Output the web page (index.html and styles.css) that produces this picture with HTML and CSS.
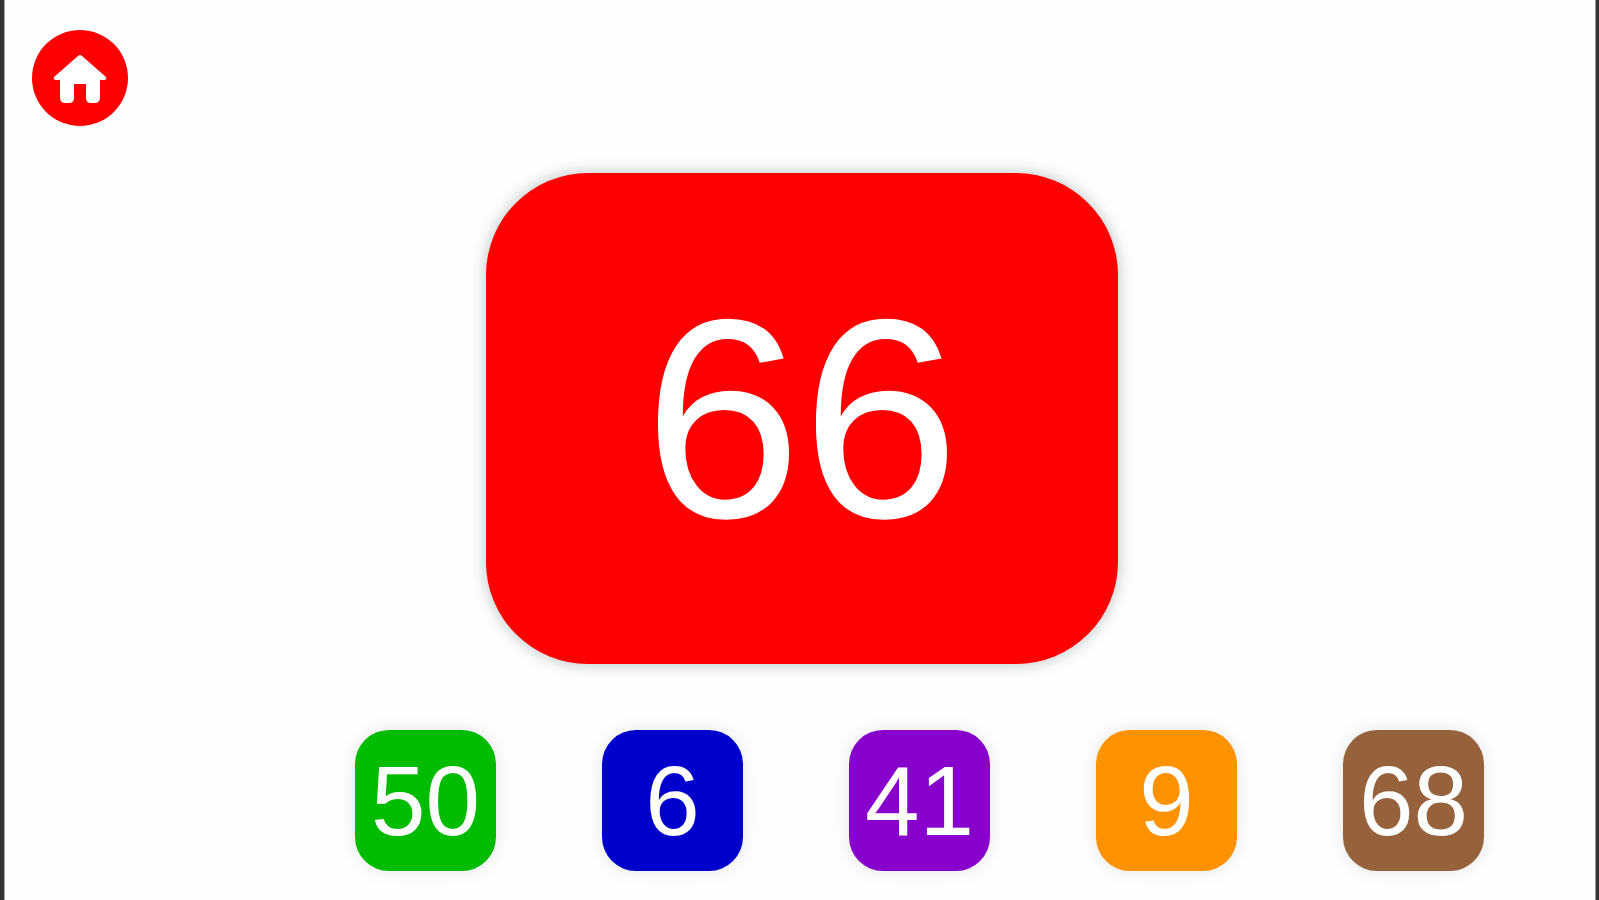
FILE: index.html
```html
<!DOCTYPE html>
<html lang="en">
<head>
<meta charset="utf-8">
<meta name="viewport" content="width=device-width, initial-scale=1">
<title>Numbers</title>
<link rel="stylesheet" href="styles.css">
</head>
<body>
<div class="screen">
  <header class="top">
    <a class="home" href="#" aria-label="Home">
      <svg class="home-icon" viewBox="0 0 54 50" aria-hidden="true">
        <path fill="#fff" d="M27 2 Q28 2 29 3 L53 24 Q54 27 51 27 H47 V44 Q47 50 42 50 H38 Q33 50 33 45 V31 H21 V45 Q21 50 16 50 H12 Q7 50 7 44 V27 H3 Q0 27 1 24 L25 3 Q26 2 27 2 Z"/>
      </svg>
    </a>
  </header>
  <main class="game">
    <button class="card" type="button">66</button>
    <div class="choices">
      <button class="tile green" type="button">50</button>
      <button class="tile blue" type="button">6</button>
      <button class="tile purple" type="button">41</button>
      <button class="tile orange" type="button">9</button>
      <button class="tile brown" type="button">68</button>
    </div>
  </main>
</div>
</body>
</html>
```
FILE: styles.css
```css
* { box-sizing: border-box; }
body {
  margin: 0;
  background: #fefefe;
  font-family: "Liberation Sans", Arial, Helvetica, sans-serif;
}
.screen {
  min-height: 100vh;
  border: solid #333;
  border-width: 0 3px 0 4px;
  box-shadow: inset 1px 0 #aaa, inset -1px 0 #999;
}
.top {
  display: flex;
  padding: 30px 28px 0;
}
.home {
  display: grid;
  place-items: center;
  width: 96px;
  height: 96px;
  border-radius: 50%;
  background: #f00;
}
.home-icon { width: 54px; height: 50px; }
.game {
  display: flex;
  flex-direction: column;
  align-items: center;
  gap: 66px;
  padding: 47px 0 28px 3px;
}
.card, .tile {
  padding: 0;
  border: 0;
  color: #fff;
  font-family: inherit;
  line-height: 1;
  cursor: pointer;
}
.card {
  width: 632px;
  height: 491px;
  border-radius: 102px;
  background: #f00;
  font-size: 284px;
  box-shadow: 0 0 16px rgba(0, 40, 40, .28);
}
.choices {
  display: flex;
  gap: 106px;
  padding-left: 236px;
}
.tile {
  width: 141px;
  height: 141px;
  border-radius: 34px;
  font-size: 98px;
  box-shadow: 0 0 18px rgba(0, 0, 0, .1);
}
.green { background: #00bc00; }
.blue { background: #0000cc; }
.purple { background: #8800cc; }
.orange { background: #ff9200; }
.brown { background: #96623c; }
```
